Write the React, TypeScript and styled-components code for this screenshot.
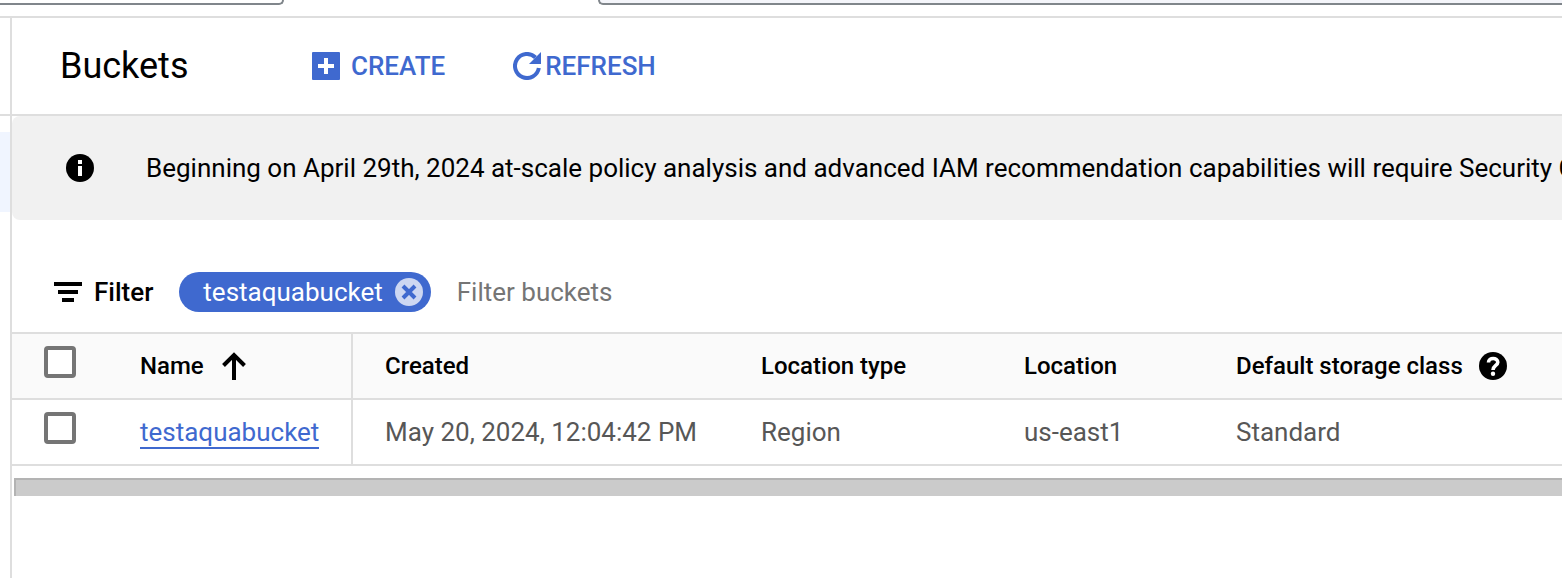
import React from "react";
import styled, { createGlobalStyle } from "styled-components";

const line = "#dedede";
const blue = "#3f69cf";

const GlobalStyle = createGlobalStyle`
  *, *::before, *::after { box-sizing: border-box; }
  html, body, #root { height: 100%; }
  body {
    margin: 0;
    background: #fff;
    color: #000;
    font-family: Roboto, "Liberation Sans", sans-serif;
    font-size: 26px;
    line-height: 32px;
    overflow: hidden;
  }
  button, input { font: inherit; color: inherit; }
`;

const Page = styled.div`
  display: flex;
  flex-direction: column;
  min-height: 100%;
`;

const TopBar = styled.header`
  display: flex;
  align-items: flex-start;
  justify-content: space-between;
  gap: 314px;
  height: 18px;
  border-bottom: 2px solid ${line};
`;

const ProjectPicker = styled.button`
  flex: none;
  width: 284px;
  height: 5px;
  padding: 0;
  background: #fff;
  border: 2px solid #80868b;
  border-width: 0 2px 2px 0;
  border-radius: 0 0 8px 0;
`;

const SearchBox = styled.input`
  flex: 1;
  min-width: 0;
  height: 5px;
  padding: 0;
  background: #f4f5fa;
  border: 2px solid #80868b;
  border-width: 0 0 2px 2px;
  border-radius: 0 0 0 8px;
`;

const Body = styled.div`
  display: flex;
  flex: 1;
`;

const SideNav = styled.nav`
  flex: none;
  width: 12px;
  border-right: 2px solid ${line};
`;

const SideNavHeader = styled.div`
  height: 98px;
  border-bottom: 2px solid ${line};
`;

const SideNavItem = styled.a`
  display: block;
  height: 80px;
  margin-top: 16px;
  background: #f0f5ff;
`;

const Main = styled.main`
  flex: 1;
  min-width: 0;
`;

const TitleBar = styled.div`
  display: flex;
  align-items: center;
  height: 98px;
  padding-left: 48px;
  border-bottom: 2px solid ${line};
`;

const Title = styled.h1`
  width: 252px;
  margin: 0;
  font-size: 36px;
  line-height: 40px;
  font-weight: 400;
`;

const ActionButton = styled.button<{ $gap: number }>`
  display: flex;
  align-items: center;
  gap: ${(p) => p.$gap}px;
  margin-right: 68px;
  padding: 0;
  border: 0;
  background: none;
  color: ${blue};
  font-weight: 500;
`;

const Banner = styled.section`
  display: flex;
  align-items: center;
  gap: 52px;
  height: 104px;
  padding-left: 54px;
  background: #f1f1f1;
  border-radius: 8px 0 0 8px;
  overflow: hidden;
`;

const BannerText = styled.p`
  margin: 0;
  white-space: nowrap;
`;

const Icon = styled.svg`
  flex: none;
  display: block;
`;

const FilterBar = styled.div`
  display: flex;
  align-items: center;
  height: 112px;
  padding: 32px 0 0 42px;
`;

const FilterLabel = styled.label`
  display: flex;
  align-items: center;
  gap: 12px;
  margin-right: 26px;
  font-weight: 500;
`;

const Chip = styled.span`
  display: flex;
  align-items: center;
  gap: 12px;
  height: 40px;
  margin-right: 26px;
  padding: 0 8px 0 24px;
  border-radius: 20px;
  background: ${blue};
  color: #fff;
`;

const ChipRemove = styled.button`
  padding: 0;
  border: 0;
  background: none;
`;

const FilterInput = styled.input`
  flex: 1;
  min-width: 0;
  padding: 0;
  border: 0;
  outline: 0;
  background: none;
  &::placeholder { color: #757575; opacity: 1; }
`;

const Table = styled.table`
  width: 100%;
  table-layout: fixed;
  border-collapse: separate;
  border-spacing: 0;
  border-top: 2px solid ${line};
`;

const Col = styled.col<{ $width?: number }>`
  width: ${(p) => (p.$width ? `${p.$width}px` : "auto")};
`;

const cell = `
  height: 66px;
  text-align: left;
  white-space: nowrap;
  border-bottom: 2px solid ${line};
`;

const HeadCell = styled.th<{ $divider?: boolean }>`
  ${cell}
  padding: 0 0 0 32px;
  background: #fafafa;
  font-size: 24px;
  font-weight: 500;
  border-right: ${(p) => (p.$divider ? `2px solid ${line}` : "0")};
`;

const BodyCell = styled.td<{ $divider?: boolean }>`
  ${cell}
  padding: 0 0 0 32px;
  color: #575757;
  border-right: ${(p) => (p.$divider ? `2px solid ${line}` : "0")};
`;

const CheckCell = styled.td<{ $head?: boolean }>`
  ${cell}
  padding: 0 0 8px 32px;
  background: ${(p) => (p.$head ? "#fafafa" : "#fff")};
`;

const Checkbox = styled.input`
  appearance: none;
  display: block;
  width: 32px;
  height: 32px;
  margin: 0;
  border: 4px solid #757575;
  border-radius: 4px;
  background: #fff;
`;

const HeadContent = styled.span<{ $gap: number }>`
  display: flex;
  align-items: center;
  gap: ${(p) => p.$gap}px;
`;

const BucketLink = styled.a`
  display: inline-block;
  line-height: 30px;
  color: ${blue};
  text-decoration: none;
  border-bottom: 2px solid ${blue};
`;

const ScrollBar = styled.div`
  height: 18px;
  margin: 12px 0 0 2px;
  background: #cbcbcb;
  border: 2px solid #b3b3b3;
  border-width: 2px 0 0 2px;
`;

const AddIcon = () => (
  <Icon width="28" height="28" viewBox="0 0 28 28" aria-hidden="true">
    <rect width="28" height="28" rx="1" fill="currentColor" />
    <path d="M12 6h4v6h6v4h-6v6h-4v-6H6v-4h6z" fill="#fff" />
  </Icon>
);

const RefreshIcon = () => (
  <Icon width="28" height="28" viewBox="0 0 28 28" aria-hidden="true">
    <path
      d="M22.500 5.500A12 12 0 1 0 25.830 16"
      fill="none"
      stroke="currentColor"
      strokeWidth="4"
    />
    <path d="M28 0v12H16z" fill="currentColor" />
  </Icon>
);

const InfoIcon = () => (
  <Icon width="28" height="28" viewBox="0 0 28 28" aria-hidden="true">
    <circle cx="14" cy="14" r="14" />
    <path d="M12 6h4v4h-4zM12 12h4v10h-4z" fill="#fff" />
  </Icon>
);

const FilterIcon = () => (
  <Icon width="28" height="20" viewBox="0 0 28 20" aria-hidden="true">
    <path d="M0 0h28v4H0zM4 8h20v4H4zM8 16h12v4H8z" />
  </Icon>
);

const RemoveIcon = () => (
  <Icon width="28" height="28" viewBox="0 0 28 28" aria-hidden="true">
    <circle cx="14" cy="14" r="14" fill="#cdd7f2" />
    <path d="M8 8l12 12M20 8L8 20" stroke={blue} strokeWidth="4" />
  </Icon>
);

const ArrowUpIcon = () => (
  <Icon width="24" height="28" viewBox="0 0 24 28" aria-hidden="true">
    <path d="M12 28V3M1.500 13.500L12 3l10.500 10.500" fill="none" stroke="#000" strokeWidth="4" />
  </Icon>
);

const HelpIcon = () => (
  <Icon width="28" height="28" viewBox="0 0 28 28" aria-hidden="true">
    <circle cx="14" cy="14" r="14" />
    <path
      d="M9.500 10.500C9.500 5.200 18.800 5.200 18.800 10.300C18.800 13.400 14 13.600 14 18"
      fill="none"
      stroke="#fff"
      strokeWidth="3.600"
    />
    <circle cx="14" cy="21.800" r="2.200" fill="#fff" />
  </Icon>
);

export default function App() {
  return (
    <Page>
      <GlobalStyle />
      <TopBar>
        <ProjectPicker type="button" aria-label="Select a project" />
        <SearchBox type="search" aria-label="Search" />
      </TopBar>
      <Body>
        <SideNav>
          <SideNavHeader />
          <SideNavItem href="#buckets" aria-label="Buckets" />
        </SideNav>
        <Main>
          <TitleBar>
            <Title>Buckets</Title>
            <ActionButton type="button" $gap={11}>
              <AddIcon />
              CREATE
            </ActionButton>
            <ActionButton type="button" $gap={4}>
              <RefreshIcon />
              REFRESH
            </ActionButton>
          </TitleBar>
          <Banner>
            <InfoIcon />
            <BannerText>
              Beginning on April 29th, 2024 at-scale policy analysis and advanced IAM recommendation
              capabilities will require Security C
            </BannerText>
          </Banner>
          <FilterBar>
            <FilterLabel htmlFor="filter">
              <FilterIcon />
              Filter
            </FilterLabel>
            <Chip>
              testaquabucket
              <ChipRemove type="button" aria-label="Remove filter">
                <RemoveIcon />
              </ChipRemove>
            </Chip>
            <FilterInput id="filter" type="text" placeholder="Filter buckets" />
          </FilterBar>
          <Table>
            <colgroup>
              <Col $width={96} />
              <Col $width={245} />
              <Col $width={376} />
              <Col $width={263} />
              <Col $width={212} />
              <Col />
            </colgroup>
            <thead>
              <tr>
                <CheckCell $head>
                  <Checkbox type="checkbox" aria-label="Select all buckets" />
                </CheckCell>
                <HeadCell $divider>
                  <HeadContent $gap={18}>
                    Name
                    <ArrowUpIcon />
                  </HeadContent>
                </HeadCell>
                <HeadCell>Created</HeadCell>
                <HeadCell>Location type</HeadCell>
                <HeadCell>Location</HeadCell>
                <HeadCell>
                  <HeadContent $gap={16}>
                    Default storage class
                    <HelpIcon />
                  </HeadContent>
                </HeadCell>
              </tr>
            </thead>
            <tbody>
              <tr>
                <CheckCell>
                  <Checkbox type="checkbox" aria-label="Select testaquabucket" />
                </CheckCell>
                <BodyCell $divider>
                  <BucketLink href="#testaquabucket">testaquabucket</BucketLink>
                </BodyCell>
                <BodyCell>May 20, 2024, 12:04:42 PM</BodyCell>
                <BodyCell>Region</BodyCell>
                <BodyCell>us-east1</BodyCell>
                <BodyCell>Standard</BodyCell>
              </tr>
            </tbody>
          </Table>
          <ScrollBar />
        </Main>
      </Body>
    </Page>
  );
}
